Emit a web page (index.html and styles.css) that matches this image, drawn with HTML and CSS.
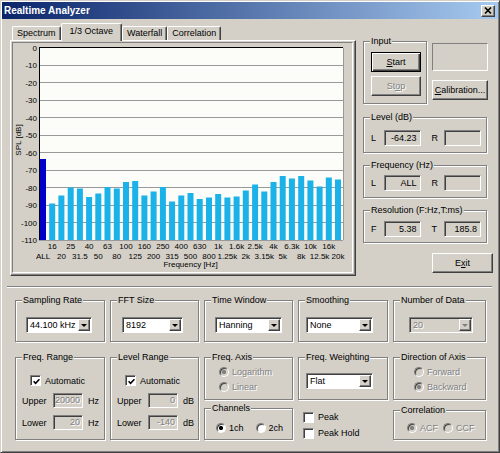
FILE: index.html
```html
<!DOCTYPE html>
<html lang="en">
<head>
    <meta charset="UTF-8">
    <title>Realtime Analyzer</title>
    <link rel="stylesheet" href="styles.css">
</head>
<body>
<div class="window">
    <!-- Title bar -->
    <div class="titlebar">
        <span>Realtime Analyzer</span>
        <span class="close"><svg width="8" height="7" viewBox="0 0 8 7"><path d="M1 0.5L7 6.5M7 0.5L1 6.5" stroke="#000" stroke-width="1.6"/></svg></span>
    </div>

    <div class="top">
        <!-- Tabs with octave chart -->
        <div class="tabview">
            <div class="tabs">
                <div class="tab">Spectrum</div>
                <div class="tab active">1/3 Octave</div>
                <div class="tab">Waterfall</div>
                <div class="tab">Correlation</div>
            </div>
            <div class="panel">
                <div class="chart">
                    <svg width="339" height="229" viewBox="0 0 339 229">
                        <rect x="26" y="4.5" width="304" height="192.5" fill="#fcfdf9"/>
                        <g stroke="#999" shape-rendering="crispEdges">
                            <line x1="26" y1="22" x2="330" y2="22"/>
                            <line x1="26" y1="39.5" x2="330" y2="39.5"/>
                            <line x1="26" y1="57" x2="330" y2="57"/>
                            <line x1="26" y1="74.5" x2="330" y2="74.5"/>
                            <line x1="26" y1="92" x2="330" y2="92"/>
                            <line x1="26" y1="109.5" x2="330" y2="109.5"/>
                            <line x1="26" y1="127" x2="330" y2="127"/>
                            <line x1="26" y1="144.5" x2="330" y2="144.5"/>
                            <line x1="26" y1="162" x2="330" y2="162"/>
                            <line x1="26" y1="179.5" x2="330" y2="179.5"/>
                            <line x1="26" y1="197" x2="330" y2="197"/>
                            <line x1="330" y1="4.5" x2="330" y2="197"/>
                        </g>
                        <rect x="27" y="116" width="6" height="81" fill="#0000c8"/>
                        <g fill="#1ab2e8">
                            <rect x="36.2" y="160.5" width="6" height="36.5"/>
                            <rect x="45.4" y="152.5" width="6" height="44.5"/>
                            <rect x="54.7" y="144.5" width="6" height="52.5"/>
                            <rect x="63.9" y="145.5" width="6" height="51.5"/>
                            <rect x="73.1" y="154" width="6" height="43"/>
                            <rect x="82.3" y="150.5" width="6" height="46.5"/>
                            <rect x="91.5" y="144" width="6" height="53"/>
                            <rect x="100.8" y="145.5" width="6" height="51.5"/>
                            <rect x="110" y="139" width="6" height="58"/>
                            <rect x="119.2" y="138" width="6" height="59"/>
                            <rect x="128.4" y="152.5" width="6" height="44.5"/>
                            <rect x="137.6" y="148.5" width="6" height="48.5"/>
                            <rect x="146.9" y="144" width="6" height="53"/>
                            <rect x="156.1" y="158.5" width="6" height="38.5"/>
                            <rect x="165.3" y="152.5" width="6" height="44.5"/>
                            <rect x="174.5" y="150" width="6" height="47"/>
                            <rect x="183.7" y="156" width="6" height="41"/>
                            <rect x="193" y="154.5" width="6" height="42.5"/>
                            <rect x="202.2" y="151" width="6" height="46"/>
                            <rect x="211.4" y="154.5" width="6" height="42.5"/>
                            <rect x="220.6" y="153.5" width="6" height="43.5"/>
                            <rect x="229.8" y="147.5" width="6" height="49.5"/>
                            <rect x="239.1" y="141.5" width="6" height="55.5"/>
                            <rect x="248.3" y="148.5" width="6" height="48.5"/>
                            <rect x="257.5" y="139" width="6" height="58"/>
                            <rect x="266.7" y="133" width="6" height="64"/>
                            <rect x="275.9" y="135.5" width="6" height="61.5"/>
                            <rect x="285.2" y="133" width="6" height="64"/>
                            <rect x="294.4" y="137.5" width="6" height="59.5"/>
                            <rect x="303.6" y="143.5" width="6" height="53.5"/>
                            <rect x="312.8" y="134.5" width="6" height="62.5"/>
                            <rect x="322" y="136.5" width="6" height="60.5"/>
                        </g>
                        <g stroke="#000" shape-rendering="crispEdges">
                            <line x1="26" y1="4.5" x2="330" y2="4.5"/>
                            <line x1="26.5" y1="4.5" x2="26.5" y2="197"/>
                        </g>
                        <g class="axis" text-anchor="end">
                            <text x="24" y="7.5">0</text>
                            <text x="24" y="25">-10</text>
                            <text x="24" y="42.5">-20</text>
                            <text x="24" y="60">-30</text>
                            <text x="24" y="77.5">-40</text>
                            <text x="24" y="95">-50</text>
                            <text x="24" y="112.5">-60</text>
                            <text x="24" y="130">-70</text>
                            <text x="24" y="147.5">-80</text>
                            <text x="24" y="165">-90</text>
                            <text x="24" y="182.5">-100</text>
                            <text x="24" y="200">-110</text>
                        </g>
                        <g class="axis" text-anchor="middle">
                            <text x="39.2" y="206">16</text>
                            <text x="57.7" y="206">25</text>
                            <text x="76.1" y="206">40</text>
                            <text x="94.5" y="206">63</text>
                            <text x="113" y="206">100</text>
                            <text x="131.4" y="206">160</text>
                            <text x="149.9" y="206">250</text>
                            <text x="168.3" y="206">400</text>
                            <text x="186.7" y="206">630</text>
                            <text x="205.2" y="206">1k</text>
                            <text x="223.6" y="206">1.6k</text>
                            <text x="242.1" y="206">2.5k</text>
                            <text x="260.5" y="206">4k</text>
                            <text x="278.9" y="206">6.3k</text>
                            <text x="297.4" y="206">10k</text>
                            <text x="315.8" y="206">16k</text>

                            <text x="30" y="215.5">ALL</text>
                            <text x="48.4" y="215.5">20</text>
                            <text x="66.9" y="215.5">31.5</text>
                            <text x="85.3" y="215.5">50</text>
                            <text x="103.8" y="215.5">80</text>
                            <text x="122.2" y="215.5">125</text>
                            <text x="140.6" y="215.5">200</text>
                            <text x="159.1" y="215.5">315</text>
                            <text x="177.5" y="215.5">500</text>
                            <text x="196" y="215.5">800</text>
                            <text x="214.4" y="215.5">1.25k</text>
                            <text x="232.8" y="215.5">2k</text>
                            <text x="251.3" y="215.5">3.15k</text>
                            <text x="269.7" y="215.5">5k</text>
                            <text x="288.2" y="215.5">8k</text>
                            <text x="306.6" y="215.5">12.5k</text>
                            <text x="325" y="215.5">20k</text>

                            <text x="177.5" y="224">Frequency [Hz]</text>
                            <text transform="translate(7.5 97) rotate(-90)">SPL [dB]</text>
                        </g>
                    </svg>
                </div>
            </div>
        </div>

        <!-- Right side controls -->
        <div class="side">
            <div class="side-top">
                <fieldset class="group input-group">
                    <legend>Input</legend>
                    <div class="group-body">
                        <button class="btn default"><u>S</u>tart</button>
                        <button class="btn" disabled>St<u>o</u>p</button>
                    </div>
                </fieldset>
                <div class="side-tools">
                    <div class="meter"></div>
                    <button class="btn calib"><u>C</u>alibration...</button>
                </div>
            </div>

            <fieldset class="group readout level">
                <legend>Level (dB)</legend>
                <div class="group-body readout-row">
                    <span class="lbl">L</span><span class="field">-64.23</span>
                    <span class="lbl second">R</span><span class="field"></span>
                </div>
            </fieldset>

            <fieldset class="group readout freq">
                <legend>Frequency (Hz)</legend>
                <div class="group-body readout-row">
                    <span class="lbl">L</span><span class="field">ALL</span>
                    <span class="lbl second">R</span><span class="field"></span>
                </div>
            </fieldset>

            <fieldset class="group readout resolution">
                <legend>Resolution (F:Hz,T:ms)</legend>
                <div class="group-body readout-row">
                    <span class="lbl">F</span><span class="field">5.38</span>
                    <span class="lbl second">T</span><span class="field">185.8</span>
                </div>
            </fieldset>

            <button class="btn exit">E<u>x</u>it</button>
        </div>
    </div>

    <div class="sep"></div>

    <!-- Analysis settings -->
    <div class="settings">
        <fieldset class="group">
            <legend>Sampling Rate</legend>
            <div class="group-body row-one rate">
                <div class="combo"><span class="combo-text">44.100 kHz</span><span class="drop"></span></div>
            </div>
        </fieldset>
        <fieldset class="group">
            <legend>FFT Size</legend>
            <div class="group-body row-one fft">
                <div class="combo"><span class="combo-text">8192</span><span class="drop"></span></div>
            </div>
        </fieldset>
        <fieldset class="group">
            <legend>Time Window</legend>
            <div class="group-body row-one window-fn">
                <div class="combo"><span class="combo-text">Hanning</span><span class="drop"></span></div>
            </div>
        </fieldset>
        <fieldset class="group">
            <legend>Smoothing</legend>
            <div class="group-body row-one smoothing">
                <div class="combo"><span class="combo-text">None</span><span class="drop"></span></div>
            </div>
        </fieldset>
        <fieldset class="group">
            <legend>Number of Data</legend>
            <div class="group-body row-one count">
                <div class="combo disabled"><span class="combo-text dim">20</span><span class="drop"></span></div>
            </div>
        </fieldset>

        <fieldset class="group">
            <legend>Freq. Range</legend>
            <div class="group-body range">
                <div class="check-row">
                    <span class="box"><svg width="7" height="7" viewBox="0 0 7 7"><path d="M0.6 3.2L2.6 5.3L6.4 1.2" fill="none" stroke="#000" stroke-width="1.6"/></svg></span>
                    <span>Automatic</span>
                </div>
                <div class="edit-row">
                    <span class="lbl">Upper</span><span class="edit dim">20000</span><span class="unit">Hz</span>
                </div>
                <div class="edit-row">
                    <span class="lbl">Lower</span><span class="edit dim">20</span><span class="unit">Hz</span>
                </div>
            </div>
        </fieldset>

        <fieldset class="group">
            <legend>Level Range</legend>
            <div class="group-body range">
                <div class="check-row">
                    <span class="box"><svg width="7" height="7" viewBox="0 0 7 7"><path d="M0.6 3.2L2.6 5.3L6.4 1.2" fill="none" stroke="#000" stroke-width="1.6"/></svg></span>
                    <span>Automatic</span>
                </div>
                <div class="edit-row">
                    <span class="lbl">Upper</span><span class="edit dim">0</span><span class="unit">dB</span>
                </div>
                <div class="edit-row">
                    <span class="lbl">Lower</span><span class="edit dim">-140</span><span class="unit">dB</span>
                </div>
            </div>
        </fieldset>

        <div class="stack">
            <fieldset class="group">
                <legend>Freq. Axis</legend>
                <div class="group-body options axis-opts">
                    <div class="opt-row"><span class="radio dis on"></span><span class="dim">Logarithm</span></div>
                    <div class="opt-row"><span class="radio dis"></span><span class="dim">Linear</span></div>
                </div>
            </fieldset>
            <fieldset class="group channels">
                <legend>Channels</legend>
                <div class="group-body options channel-opts">
                    <div class="opt-row">
                        <span class="radio on"></span><span>1ch</span>
                        <span class="radio next"></span><span>2ch</span>
                    </div>
                </div>
            </fieldset>
        </div>

        <div class="stack">
            <fieldset class="group">
                <legend>Freq. Weighting</legend>
                <div class="group-body weighting">
                    <div class="combo"><span class="combo-text">Flat</span><span class="drop"></span></div>
                </div>
            </fieldset>
            <div class="checks">
                <div class="check-line"><span class="box"></span><span>Peak</span></div>
                <div class="check-line"><span class="box"></span><span>Peak Hold</span></div>
            </div>
        </div>

        <div class="stack">
            <fieldset class="group">
                <legend>Direction of Axis</legend>
                <div class="group-body options direction-opts">
                    <div class="opt-row"><span class="radio dis"></span><span class="dim">Forward</span></div>
                    <div class="opt-row"><span class="radio dis on"></span><span class="dim">Backward</span></div>
                </div>
            </fieldset>
            <fieldset class="group correlation">
                <legend>Correlation</legend>
                <div class="group-body options corr-opts">
                    <div class="opt-row">
                        <span class="radio dis on"></span><span class="dim">ACF</span>
                        <span class="radio dis next"></span><span class="dim">CCF</span>
                    </div>
                </div>
            </fieldset>
        </div>
    </div>
</div>
</body>
</html>
```

FILE: styles.css
```css
* {
    box-sizing: border-box;
}

body {
    margin: 0;
    font-family: "Liberation Sans", Arial, sans-serif;
    font-size: 9px;
    color: #000;
    background: #d4d0c8;
}

.window {
    width: 500px;
    height: 453px;
    padding: 1px;
    background: #d4d0c8;
    border: 1px solid;
    border-color: #d4d0c8 #404040 #404040 #d4d0c8;
    box-shadow: inset 1px 1px #fff, inset -1px -1px #808080;
}

/* title bar */
.titlebar {
    height: 17px;
    display: flex;
    align-items: center;
    justify-content: space-between;
    padding: 0 3px 0 2px;
    background: linear-gradient(to right, #0a246a, #a6caf0);
    color: #fff;
    font-size: 10px;
    font-weight: bold;
}

.close {
    width: 14px;
    height: 12px;
    display: flex;
    align-items: center;
    justify-content: center;
    background: #d4d0c8;
    border: 1px solid;
    border-color: #fff #404040 #404040 #fff;
    box-shadow: inset -1px -1px #808080;
}

.close svg {
    display: block;
}

/* upper area */
.top {
    display: flex;
    align-items: flex-start;
    padding: 4px 0 0 8px;
}

.tabview {
    width: 346px;
}

.tabs {
    display: flex;
    align-items: flex-end;
    height: 17px;
    padding-left: 2px;
}

.tab {
    height: 14px;
    padding: 0 4px;
    line-height: 12px;
    white-space: nowrap;
    border: 1px solid;
    border-bottom: 0;
    border-color: #fff #404040 #404040 #fff;
    border-radius: 2px 2px 0 0;
    box-shadow: inset -1px 0 #808080;
}

.tab.active {
    position: relative;
    z-index: 1;
    height: 18px;
    margin-bottom: -1px;
    padding: 0 8px;
    line-height: 15px;
    background: #d4d0c8;
}

.panel {
    height: 236px;
    padding: 1px 2px 2px 1px;
    border: 1px solid;
    border-color: #fff #404040 #404040 #fff;
    box-shadow: inset -1px -1px #808080;
}

.chart {
    height: 100%;
    border: 1px solid;
    border-color: #808080 #fff #fff #808080;
}

.chart svg {
    display: block;
}

.axis text {
    font-family: "Liberation Sans", Arial, sans-serif;
    font-size: 8px;
    fill: #000;
}

/* group boxes */
.group {
    margin: 0;
    padding: 0;
    min-width: 0;
    border: 1px solid #808080;
    box-shadow: inset 1px 1px #fff, 1px 1px #fff;
}

.group legend {
    margin-left: 6px;
    padding: 0 1px;
    line-height: 10px;
    background: #d4d0c8;
}

.group-body {
    display: flex;
    flex-direction: column;
}

/* buttons */
.btn {
    width: 50px;
    height: 20px;
    padding: 0;
    font: inherit;
    color: #000;
    background: #d4d0c8;
    border: 1px solid;
    border-color: #fff #404040 #404040 #fff;
    box-shadow: inset -1px -1px #808080;
}

.btn.default {
    border-color: #000;
    box-shadow: inset 1px 1px #fff, inset -1px -1px #404040, inset -2px -2px #808080;
}

.btn:disabled {
    color: #808080;
    text-shadow: 1px 1px #fff;
}

/* right column */
.side {
    width: 127px;
    margin-left: 7px;
    padding-top: 13px;
    display: flex;
    flex-direction: column;
}

.side-top {
    display: flex;
    gap: 5px;
}

.input-group {
    width: 64px;
}

.input-group .group-body {
    padding: 6px 5px 7px 7px;
    gap: 4px;
}

.side-tools {
    width: 56px;
    display: flex;
    flex-direction: column;
}

.meter {
    height: 28px;
    margin-top: 7px;
    border: 1px solid;
    border-color: #808080 #fff #fff #808080;
}

.calib {
    width: 56px;
    margin-top: 9px;
}

.readout {
    width: 124px;
    margin-top: 7px;
}

.readout.level {
    margin-top: 8px;
}

.readout-row {
    flex-direction: row;
    align-items: center;
    padding: 5px 5px 6px 7px;
}

.level .readout-row {
    padding-top: 8px;
}

.resolution .readout-row {
    padding: 6px 5px 5px 7px;
}

.readout-row .lbl {
    width: 13px;
}

.readout-row .lbl.second {
    width: 24px;
    padding-left: 11px;
}

.field {
    width: 37px;
    height: 16px;
    padding-right: 3px;
    line-height: 14px;
    text-align: right;
    border: 1px solid;
    border-color: #808080 #fff #fff #808080;
    box-shadow: inset 1px 1px #404040;
}

.exit {
    width: 61px;
    margin: 10px -3px 0 0;
    align-self: flex-end;
}

.sep {
    margin: 10px 6px 0 5px;
    border-top: 1px solid #808080;
    border-bottom: 1px solid #fff;
}

/* lower settings */
.settings {
    display: grid;
    grid-template-columns: 90px 89px 89px 90px 93px;
    column-gap: 5px;
    row-gap: 10px;
    align-items: start;
    margin: 7px 0 0 13px;
}

.row-one {
    padding: 12px 0 8px 10px;
}

.row-one .combo {
    width: 66px;
}

.fft {
    padding-left: 11px;
}

.fft .combo {
    width: 61px;
}

.window-fn .combo,
.smoothing .combo {
    width: 67px;
}

.smoothing {
    padding-left: 7px;
}

.count {
    padding-left: 15px;
}

.count .combo {
    width: 64px;
}

.combo {
    display: flex;
    height: 16px;
    padding: 1px;
    background: #fff;
    border: 1px solid;
    border-color: #808080 #fff #fff #808080;
    box-shadow: inset 1px 1px #404040;
}

.combo-text {
    flex: 1;
    padding-left: 2px;
    line-height: 12px;
    white-space: nowrap;
}

.drop {
    width: 12px;
    display: flex;
    align-items: center;
    justify-content: center;
    background: #d4d0c8;
    border: 1px solid;
    border-color: #fff #404040 #404040 #fff;
    box-shadow: inset -1px -1px #808080;
}

.drop::after {
    content: "";
    border-left: 3px solid transparent;
    border-right: 3px solid transparent;
    border-top: 3px solid #000;
}

.combo.disabled {
    background: #d4d0c8;
}

.combo.disabled .drop::after {
    border-top-color: #808080;
}

.dim {
    color: #808080;
    text-shadow: 1px 1px #fff;
}

.range {
    padding: 13px 0 9px 0;
}

.check-row {
    display: flex;
    align-items: center;
    gap: 4px;
    height: 11px;
    padding-left: 14px;
}

.box {
    width: 11px;
    height: 11px;
    flex: none;
    display: flex;
    align-items: center;
    justify-content: center;
    background: #fff;
    border: 1px solid;
    border-color: #808080 #fff #fff #808080;
    box-shadow: inset 1px 1px #404040;
}

.box svg {
    display: block;
    margin: 1px 0 0 1px;
}

.edit-row {
    display: flex;
    align-items: center;
    height: 15px;
    margin-top: 7px;
    padding-left: 6px;
}

.edit-row .lbl {
    width: 31px;
}

.edit {
    width: 30px;
    height: 15px;
    padding-right: 2px;
    line-height: 13px;
    text-align: right;
    border: 1px solid;
    border-color: #808080 #fff #fff #808080;
    box-shadow: inset 1px 1px #404040;
}

.unit {
    margin-left: 5px;
}

.stack {
    display: flex;
    flex-direction: column;
}

.options {
    padding: 4px 0 6px 14px;
    gap: 3px;
}

.opt-row {
    display: flex;
    align-items: center;
    gap: 3px;
    height: 12px;
}

.radio {
    width: 10px;
    height: 10px;
    flex: none;
    border-radius: 50%;
    background: #fff;
    border: 1px solid;
    border-color: #808080 #fff #fff #808080;
    box-shadow: inset 1px 1px #404040;
}

.radio.on {
    background: radial-gradient(circle, #000 0 1.8px, #fff 2.4px);
}

.radio.dis {
    background: #d4d0c8;
}

.radio.dis.on {
    background: radial-gradient(circle, #808080 0 1.8px, #d4d0c8 2.4px);
}

.radio.next {
    margin-left: 9px;
}

.channels {
    margin-top: 3px;
}

.channel-opts {
    padding: 9px 0 5px 11px;
}

.weighting {
    padding: 11px 0 10px 7px;
}

.weighting .combo {
    width: 67px;
}

.checks {
    display: flex;
    flex-direction: column;
    gap: 4px;
    margin-top: 11px;
    padding-left: 5px;
}

.check-line {
    display: flex;
    align-items: center;
    gap: 4px;
    height: 12px;
}

.direction-opts {
    padding-left: 20px;
}

.correlation {
    margin-top: 5px;
}

.corr-opts {
    padding: 7px 0 5px 13px;
}

.corr-opts .radio.next {
    margin-left: 2px;
}
```
